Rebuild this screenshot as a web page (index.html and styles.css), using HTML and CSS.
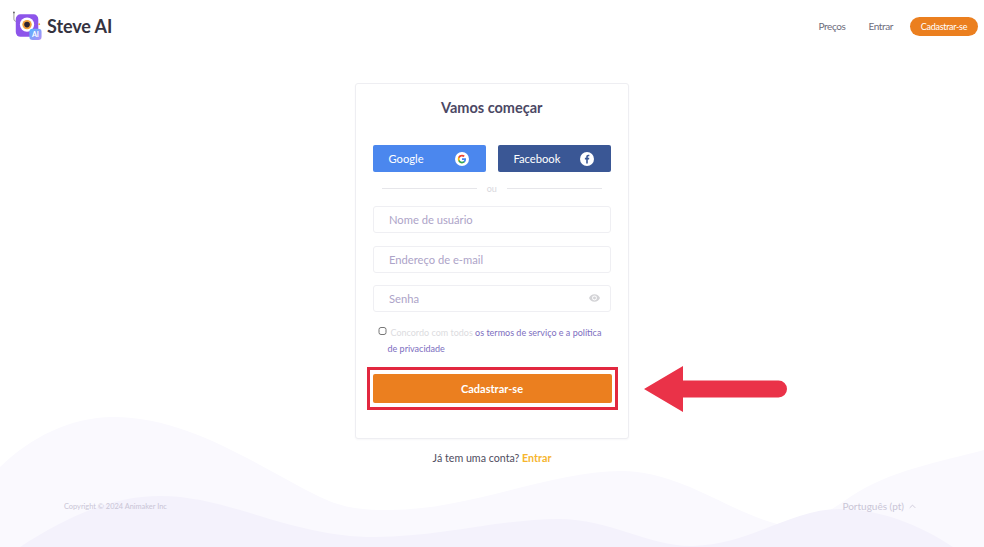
FILE: index.html
```html
<!DOCTYPE html>
<html lang="pt">
<head>
<meta charset="utf-8">
<title>Steve AI</title>
<link rel="stylesheet" href="styles.css">
</head>
<body>
<div class="page">
  <svg class="waves" viewBox="0 0 984 547" aria-hidden="true">
    <path class="wave-light" d="M0 467C30 438 70 417 113 417C190 417 255 465 320 497C345 509 365 510 389 510C470 510 550 471 621 471C680 471 725 510 777 524C800 529 825 515 850 497C890 470 940 462 984 450V547H0Z"/>
    <path class="wave-dark" d="M20 547C65 518 110 496 160 496C230 496 290 537 375 537C440 537 500 519 559 519C610 519 650 547 693 546C750 545 790 509 840 509C880 509 920 525 953 547Z"/>
  </svg>

  <header class="topbar">
    <a class="brand" href="#">
      <svg class="logo" viewBox="0 0 32 32" aria-hidden="true">
        <defs>
          <linearGradient id="ai" x1="0" y1="0" x2="1" y2="1"><stop offset="0" stop-color="#54b4ff"/><stop offset="1" stop-color="#b48cf5"/></linearGradient>
        </defs>
        <path d="M1.500 1.500v7c0 2 1.500 2.500 2.500 2.500" fill="none" stroke="#777" stroke-width=".8"/>
        <circle cx="1.500" cy="1.500" r="1" fill="#666"/>
        <rect x="3.500" y="3.500" width="24" height="24" rx="5" fill="#8d55ea"/>
        <circle cx="15.500" cy="14.500" r="7.600" fill="#fff"/>
        <circle cx="15.500" cy="14.500" r="5" fill="#f0a13c"/>
        <circle cx="15.500" cy="14.500" r="3" fill="#2b2230"/>
        <circle cx="28.500" cy="14" r="1" fill="#f5b040"/>
        <rect x="18" y="19" width="13" height="12" rx="3.500" fill="url(#ai)"/>
        <text x="24.500" y="28" class="logo-ai">AI</text>
      </svg>
      <span class="brand-name">Steve AI</span>
    </a>
    <nav class="nav">
      <a href="#">Preços</a>
      <a class="nav-entrar" href="#">Entrar</a>
      <a class="nav-cta" href="#">Cadastrar-se</a>
    </nav>
  </header>

  <main class="main">
    <section class="card">
      <h1 class="title">Vamos começar</h1>
      <div class="socials">
        <button class="social google" type="button">
          <span>Google</span>
          <svg class="social-icon" viewBox="0 0 16 16" aria-hidden="true">
            <circle cx="8" cy="8" r="8" fill="#fff"/>
            <path d="M12.600 8.200c0-.4 0-.7-.1-1H8v1.900h2.600c-.1.6-.5 1.100-1 1.500v1.200h1.600c.9-.9 1.400-2.100 1.400-3.600z" fill="#4285f4"/>
            <path d="M8 13c1.300 0 2.400-.4 3.200-1.200l-1.600-1.200c-.4.300-1 .5-1.600.5-1.200 0-2.300-.8-2.700-2H3.700v1.200C4.500 12 6.100 13 8 13z" fill="#34a853"/>
            <path d="M5.300 9.100c-.2-.7-.2-1.500 0-2.200V5.700H3.700c-.7 1.400-.7 3.200 0 4.600z" fill="#fbbc05"/>
            <path d="M8 5c.7 0 1.300.2 1.800.7l1.400-1.400C10.400 3.500 9.300 3 8 3 6.100 3 4.500 4 3.700 5.700l1.600 1.200C5.700 5.800 6.800 5 8 5z" fill="#ea4335"/>
          </svg>
        </button>
        <button class="social facebook" type="button">
          <span>Facebook</span>
          <svg class="social-icon" viewBox="0 0 16 16" aria-hidden="true">
            <circle cx="8" cy="8" r="8" fill="#fff"/>
            <path d="M8.900 13V8.500h1.500l.2-1.800H8.900V5.700c0-.5.200-.9.900-.9h.9V3.200c-.2 0-.7-.1-1.300-.1-1.400 0-2.300.8-2.300 2.400v1.200H5.600v1.800h1.500V13z" fill="#3a5795"/>
          </svg>
        </button>
      </div>
      <div class="divider"><span>ou</span></div>
      <form class="form">
        <div class="field"><input type="text" placeholder="Nome de usuário"></div>
        <div class="field"><input type="email" placeholder="Endereço de e-mail"></div>
        <div class="field">
          <input type="password" placeholder="Senha">
          <svg class="eye" viewBox="0 0 24 16" aria-hidden="true">
            <path d="M12 0C6.500 0 2 3.300 0 8c2 4.700 6.500 8 12 8s10-3.300 12-8c-2-4.700-6.500-8-12-8zm0 13.300A5.300 5.300 0 1 1 12 2.700a5.300 5.300 0 0 1 0 10.600zM12 4.800a3.200 3.200 0 1 0 0 6.400 3.200 3.200 0 0 0 0-6.400z" fill="#d3d3d6"/>
          </svg>
        </div>
        <div class="terms">
          <input class="terms-check" type="checkbox" id="terms">
          <p class="terms-line terms-first"><label for="terms">Concordo com todos</label> <a href="#">os termos de serviço e a política</a></p>
          <p class="terms-line"><a href="#">de privacidade</a></p>
        </div>
        <div class="highlight">
          <button class="submit" type="button">Cadastrar-se</button>
        </div>
      </form>
    </section>
    <p class="signin">Já tem uma conta? <a href="#">Entrar</a></p>
  </main>

  <footer class="footer">
    <span class="copyright">Copyright © 2024 Animaker Inc</span>
    <span class="language">Português (pt)
      <svg class="chevron" viewBox="0 0 10 6" aria-hidden="true"><path d="M1 5l4-4 4 4" fill="none" stroke="#c9c5d6" stroke-width="1.200"/></svg>
    </span>
  </footer>

  <svg class="arrow" viewBox="0 0 143 46" aria-hidden="true">
    <path d="M0 23L39 0V14.500H134.500a8.500 8.500 0 0 1 0 17H39V46Z" fill="#ea3248"/>
  </svg>
</div>
</body>
</html>
```

FILE: styles.css
```css
* { box-sizing: border-box; }
html, body { margin: 0; padding: 0; background: #fff; }
body { font-family: Lato, "Open Sans", sans-serif; color: #4a4760; }
a { text-decoration: none; color: inherit; }

.page { position: relative; width: 984px; height: 547px; overflow: hidden; display: flex; flex-direction: column; }
.waves { position: absolute; left: 0; top: 0; width: 984px; height: 547px; }
.wave-light { fill: #faf9fe; }
.wave-dark { fill: #f4f2fc; }

.topbar { position: relative; display: flex; justify-content: space-between; align-items: center; height: 52px; padding: 0 6px 0 12px; }
.brand { display: flex; align-items: center; gap: 4px; }
.logo { width: 31px; height: 30px; display: block; }
.logo-ai { font: 700 7.500px Lato, sans-serif; fill: #fff; text-anchor: middle; }
.brand-name { font-size: 18px; font-weight: 700; color: #35333f; letter-spacing: -.1px; }
.nav { display: flex; align-items: center; font-size: 10px; letter-spacing: -.4px; color: #6d6c7c; }
.nav-entrar { margin: 0 17px 0 23px; }
.nav-cta { display: block; width: 68px; height: 19px; line-height: 19px; border-radius: 10px; background: #eb7f1f; color: #fff; font-size: 9px; letter-spacing: -.3px; text-align: center; }

.main { position: relative; display: flex; flex-direction: column; align-items: center; padding-top: 31px; }
.card { width: 274px; height: 356px; background: #fff; border: 1px solid #eeeef2; border-radius: 3px; padding: 0 17px 0 16.500px; box-shadow: 0 1px 2px rgba(60,50,110,.04); }
.title { margin: 13px 0 0; height: 22px; line-height: 22px; text-align: center; font-size: 14.500px; font-weight: 700; color: #4b4864; }

.socials { display: flex; justify-content: space-between; margin-top: 26px; }
.social { width: 113.500px; height: 27px; border: 0; border-radius: 2px; display: flex; align-items: center; justify-content: space-between; padding: 0 17px 0 16px; color: #fff; font: 11.200px Lato, sans-serif; }
.google { background: #4b87ee; }
.facebook { background: #3a5795; }
.social-icon { width: 14px; height: 14px; display: block; }

.divider { display: flex; align-items: center; justify-content: center; gap: 10px; height: 16px; margin: 8px 0 0; font-size: 9px; color: #d8d8dd; }
.divider::before, .divider::after { content: ""; width: 95px; height: 1px; background: #e6e6ea; }

.form { margin-top: 10px; display: flex; flex-direction: column; }
.field { position: relative; height: 27px; margin-bottom: 12.500px; }
.field input { width: 100%; height: 100%; padding: 0 15.500px; border: 1px solid #efeff3; border-radius: 3px; background: #fff; outline: 0; font: 11.200px Lato, sans-serif; color: #4a4760; }
.field input::placeholder { color: #ada4c8; opacity: 1; }
.eye { position: absolute; right: 11px; top: 8.500px; width: 11px; height: 8px; }

.terms { position: relative; height: 32px; font-size: 9px; line-height: 16px; color: #dcdce0; }
.terms-check { position: absolute; left: 5.500px; top: 2px; margin: 0; width: 8.500px; height: 8.500px; }
.terms-line { margin: 0; padding-left: 15px; white-space: nowrap; }
.terms-first { padding-left: 18px; }
.terms-line a { color: #7d6ec0; }

.highlight { width: 251px; height: 43px; margin: 10px 0 0 -6px; border: 3px solid #e2283f; padding: 4px 3px 3px; }
.submit { display: block; width: 239px; height: 29px; border: 0; border-radius: 2px; background: #eb7f1f; color: #fff; font: 700 11px Lato, sans-serif; }

.signin { margin: 12px 0 0; font-size: 10.700px; line-height: 14px; color: #4f4d5e; text-align: center; }
.signin a { color: #f6b52e; font-weight: 700; }

.footer { position: absolute; left: 64px; right: 68px; top: 500px; display: flex; justify-content: space-between; align-items: center; color: #c9c5d6; }
.copyright { font-size: 7.400px; }
.language { font-size: 10px; display: flex; align-items: center; gap: 5px; }
.chevron { width: 7px; height: 5px; }

.arrow { position: absolute; left: 644px; top: 365.500px; width: 143px; height: 46px; }
```
